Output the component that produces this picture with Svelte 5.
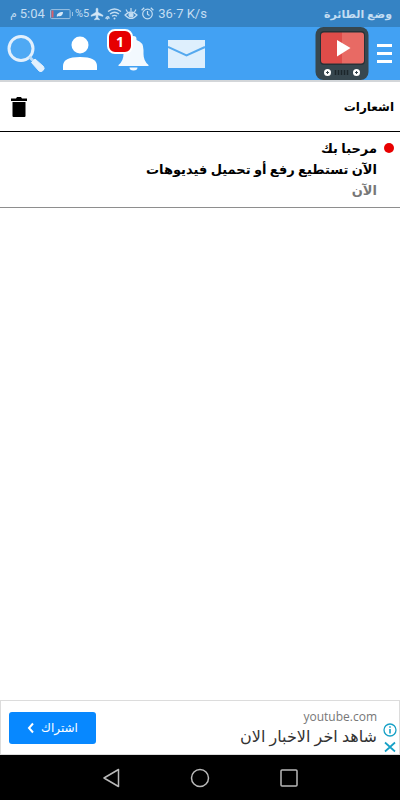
<script>
  let menuOpen = $state(false);
  let notifications = $state([
    { id: 1, title: 'مرحبا بك', text: 'الآن تستطيع رفع أو تحميل فيديوهات', time: 'الآن', unread: true }
  ]);
  let unread = $derived(notifications.filter((n) => n.unread).length);

  function clearAll() {
    notifications = [];
  }
</script>

<div class="app">
  <div class="status">
    <div class="status-side">
      <span class="clock"><span class="pm">م</span><span>5:04</span></span>
      <svg width="24" height="12" viewBox="0 0 24 12" aria-hidden="true">
        <rect x=".6" y="1.6" width="19.5" height="9" rx="1" fill="none" stroke="#9cc3e3" />
        <path d="M1.5 2.5h2v7h-2z" fill="#d9606b" />
        <path d="M7 9c-1-3 2-5 6-5 0 3-2 5-5 4z" fill="#d5e8f7" />
        <path d="M22.5 4v4" stroke="#9cc3e3" />
      </svg>
      <span class="percent">%5</span>
      <svg width="14" height="14" viewBox="0 0 24 24" aria-hidden="true">
        <path d="M22 16v-2l-8.500-5V3.500a1.500 1.500 0 0 0-3 0V9L2 14v2l8.500-2.500V19L8 20.500V22l4-1 4 1v-1.500L13.500 19v-5.500z" fill="#d5e8f7" stroke="#d5e8f7" />
      </svg>
      <svg width="18" height="14" viewBox="0 0 18 14" fill="none" stroke="#c3ddf2" stroke-width="1.300" aria-hidden="true">
        <path d="M3 4.500q6.500-5 13 0M5 7q4.500-3.500 9 0M7 9.300q2.500-2 5 0" />
        <circle cx="9.500" cy="11.500" r="1" fill="#c3ddf2" stroke="none" />
        <path d="M1 12a2 2 0 0 1 3-2M2.500 12.500a1 1 0 0 1 2-1" />
      </svg>
      <svg width="14" height="14" viewBox="0 0 14 14" fill="none" stroke="#c3ddf2" stroke-width="1.200" aria-hidden="true">
        <path d="M1 8q6-6 12 0-6 7-12 0zM7 4V1M3.500 5L2 2.500M10.500 5L12 2.500" />
        <circle cx="7" cy="8" r="2" fill="#c3ddf2" />
      </svg>
      <svg class="alarm" width="13" height="13" viewBox="0 0 13 13" fill="none" stroke="#c3ddf2" stroke-width="1.200" aria-hidden="true">
        <circle cx="6.500" cy="7" r="4.800" />
        <path d="M6.500 4v3.200l2 1.300M.6 3.200L3.200.8M12.400 3.200L9.800.8" />
      </svg>
      <span class="speed">36·7 K/s</span>
    </div>
    <span class="mode" dir="rtl">وضع الطائرة</span>
  </div>

  <header class="topbar">
    <nav class="tabs">
      <button class="tab" aria-label="بحث">
        <svg width="40" height="40" viewBox="0 0 40 40" aria-hidden="true">
          <circle cx="15" cy="14.500" r="12" fill="#4fa9f4" stroke="#e2f0fd" stroke-width="3" />
          <path d="M23.500 23l4 4" stroke="#b9dbf8" stroke-width="3" />
          <path d="M25.500 28.500l3.500-3.500 8.500 7.500q1.500 2-.5 4t-4 .5z" fill="#e2f0fd" stroke="#e2f0fd" stroke-linejoin="round" />
        </svg>
      </button>
      <button class="tab" aria-label="الملف الشخصي">
        <svg width="40" height="40" viewBox="0 0 40 40" aria-hidden="true">
          <circle cx="20" cy="11" r="8.500" fill="#fff" />
          <path d="M3 36v-4q0-9 17-9t17 9v4z" fill="#fff" />
        </svg>
      </button>
      <button class="tab" aria-label="اشعارات">
        <svg width="40" height="40" viewBox="0 0 40 40" aria-hidden="true">
          <path d="M4.500 31q5-4 5-11v-4q0-8 7-10V5q0-3 3-3t3 3v1q7 2 7 10v4q0 7 5 11v1h-30z" fill="#f3f9fe" />
          <path d="M15.500 33.500h8a4 3 0 0 1-8 0z" fill="#f3f9fe" />
        </svg>
        {#if unread}<span class="badge">{unread}</span>{/if}
      </button>
      <button class="tab" aria-label="الرسائل">
        <svg width="40" height="40" viewBox="0 0 40 40" aria-hidden="true">
          <path d="M0 6h37v28H0z" fill="#deeffd" />
          <path d="M0 13l18.500 8.500L37 13" fill="none" stroke="#55a9ef" stroke-width="2" />
        </svg>
      </button>
    </nav>
    <div class="brand">
      <a href="#home" class="logo" aria-label="الرئيسية">
        <svg width="54" height="54" viewBox="0 0 54 54" aria-hidden="true">
          <rect x=".5" y="0" width="53" height="53" rx="8" fill="#37474f" />
          <rect x="5" y="4" width="45" height="34" rx="4" fill="#263238" />
          <path d="M27 5.500v31H9a3 3 0 0 1-3-3v-25a3 3 0 0 1 3-3z" fill="#df4c49" />
          <path d="M27 5.500h19a3 3 0 0 1 3 3v25a3 3 0 0 1-3 3H27z" fill="#e86a64" />
          <path d="M22 13v16.500L35.500 21z" fill="#fff" />
          <path d="M20.500 43v5M23.500 43v5M26.500 43v5M29.500 43v5M32.500 43v5" stroke="#1c262b" stroke-width="1.500" />
          <circle cx="12.500" cy="45.500" r="3.500" fill="#fff" />
          <circle cx="41.500" cy="45.500" r="3.500" fill="#fff" />
          <path d="M12.500 44v3M11 45.500h3M41.500 44v3M40 45.500h3" stroke="#37474f" />
        </svg>
      </a>
      <button class="menu" aria-label="القائمة" aria-expanded={menuOpen} onclick={() => (menuOpen = !menuOpen)}>
        <span></span><span></span><span></span>
      </button>
    </div>
  </header>

  <main dir="rtl">
    <div class="page-head">
      <h1>اشعارات</h1>
      <button class="trash" aria-label="حذف الكل" onclick={clearAll}>
        <svg width="16" height="20" viewBox="0 0 16 20" aria-hidden="true">
          <path d="M0 1.500h5L6 0h4l1 1.500h5V4H0zM1.500 5h13v14q0 1-1 1h-11q-1 0-1-1z" fill="#000" />
        </svg>
      </button>
    </div>
    <ul class="list">
      {#each notifications as n (n.id)}
        <li class="note">
          <span class="dot" class:read={!n.unread}></span>
          <div>
            <h2>{n.title}</h2>
            <p>{n.text}</p>
            <time>{n.time}</time>
          </div>
        </li>
      {/each}
    </ul>
  </main>

  <aside class="ad" dir="rtl">
    <div class="ad-marks">
      <a href="#why" aria-label="معلومات الإعلان">
        <svg width="14" height="14" viewBox="0 0 14 14" fill="none" stroke="#16a0c6" stroke-width="1.300" aria-hidden="true">
          <circle cx="7" cy="7" r="6" />
          <path d="M7 6v4.500M7 3.300v1.400" stroke-width="1.600" />
        </svg>
      </a>
      <button aria-label="إغلاق">
        <svg width="12" height="12" viewBox="0 0 12 12" aria-hidden="true">
          <path d="M1 1.500l10 9M11 1.500l-10 9" stroke="#16a0c6" stroke-width="1.700" />
        </svg>
      </button>
    </div>
    <div class="ad-text">
      <span class="ad-site">youtube.com</span>
      <span class="ad-title">شاهد اخر الاخبار الان</span>
    </div>
    <button class="subscribe">
      اشتراك
      <svg width="7" height="12" viewBox="0 0 7 12" aria-hidden="true">
        <path d="M6 1.500L2 6l4 4.500" fill="none" stroke="#fff" stroke-width="2" />
      </svg>
    </button>
  </aside>

  <nav class="sysnav">
    <button aria-label="رجوع">
      <svg width="20" height="20" viewBox="0 0 20 20"><path d="M17.500 1.500v17L3 10z" fill="none" stroke="#b9b9b9" stroke-width="1.500" stroke-linejoin="round" /></svg>
    </button>
    <button aria-label="الشاشة الرئيسية">
      <svg width="20" height="20" viewBox="0 0 20 20"><circle cx="10" cy="10" r="8.500" fill="none" stroke="#b9b9b9" stroke-width="1.500" /></svg>
    </button>
    <button aria-label="التطبيقات الأخيرة">
      <svg width="20" height="20" viewBox="0 0 20 20"><rect x="2" y="2" width="16" height="16" rx="1" fill="none" stroke="#b9b9b9" stroke-width="1.500" /></svg>
    </button>
  </nav>
</div>

<style>
  :global(body){background:#fff}
  .app{min-height:100vh;display:flex;flex-direction:column;font-family:"Open Sans","DejaVu Sans",sans-serif;color:#000}
  button{padding:0;border:0;background:none;font-family:inherit;color:inherit;cursor:pointer}
  svg{display:block}
  h1,h2,p,ul{margin:0;padding:0}

  .status{height:27px;padding:0 8px 0 10px;box-sizing:border-box;background:#3583c4;color:#c3ddf2;display:flex;align-items:center;justify-content:space-between;white-space:nowrap}
  .status-side{display:flex;align-items:center;gap:1px}
  .clock{display:flex;align-items:center;gap:3px;margin-right:4px}
  .clock,.speed{font-family:Roboto,"DejaVu Sans",sans-serif;font-size:13px}
  .pm{font-size:11px}
  .percent{font-family:Roboto,sans-serif;font-size:11px}
  .alarm{margin:0 3px 0 2px}
  .mode{font-size:11px;font-weight:700}

  .topbar{height:53px;background:#42a1f3;border-bottom:2px solid #d3d6d9;display:flex;align-items:center;justify-content:space-between;padding:0 8px 0 6px}
  .tabs{display:flex;gap:14px}
  .tab{position:relative}
  .badge{position:absolute;left:-7px;top:-5px;min-width:22px;height:21px;border:2px solid #fff;border-radius:8px;background:#e60000;color:#fff;font:700 14px/21px "Open Sans",sans-serif;text-align:center}
  .brand{display:flex;align-items:center;gap:8px}
  .menu{display:flex;flex-direction:column;gap:5px}
  .menu span{width:15px;height:3px;background:#fff}

  main{flex:1}
  .page-head{height:49px;border-bottom:1px solid #000;padding:0 6px 0 11px;display:flex;align-items:center;justify-content:space-between}
  h1{font-size:12px;line-height:20px;font-weight:700}
  .list{list-style:none}
  .note{display:flex;gap:7px;padding:6px;border-bottom:1px solid #8e8e8e;font-size:13px;line-height:21px;font-weight:700}
  .dot{width:10px;height:10px;margin-top:5px;border-radius:50%;background:#e80000}
  .dot.read{background:transparent}
  h2{font-size:13px;line-height:21px}
  time{display:block;color:#777}

  .ad{height:53px;border:1px solid #dcdcdc;display:flex;align-items:center;padding:0 2px 0 8px;gap:6px}
  .ad-marks{display:flex;flex-direction:column;align-items:center;gap:4px;padding-top:20px}
  .ad-text{flex:1;display:flex;flex-direction:column;align-items:flex-start}
  .ad-site{font-size:12px;line-height:16px;color:#777}
  .ad-title{font-size:16px;line-height:22px;color:#333}
  .subscribe{width:87px;height:32px;border-radius:3px;background:#0788ff;color:#fff;font-size:12px;display:flex;align-items:center;justify-content:center;gap:7px}

  .sysnav{height:45px;background:#000;display:flex;align-items:center;justify-content:center;gap:69px}
</style>
